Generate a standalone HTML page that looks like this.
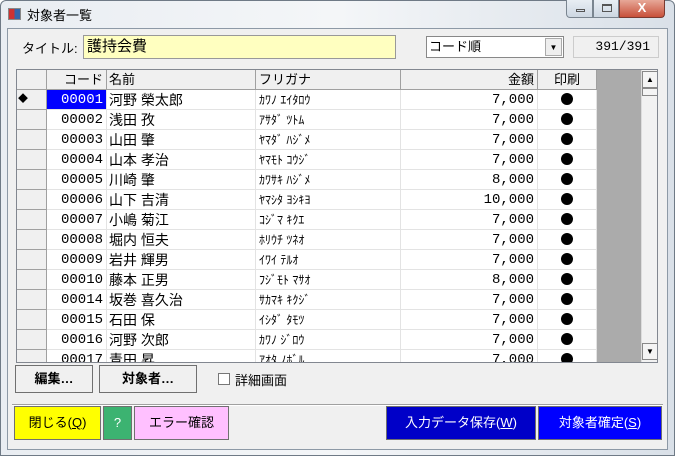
<!DOCTYPE html>
<html><head><meta charset="utf-8"><style>
*{margin:0;padding:0;box-sizing:border-box}
body{width:675px;height:456px;overflow:hidden;background:#fff;font-family:"Liberation Sans","Noto Sans CJK JP",sans-serif;font-size:13px;position:relative}
.a{position:absolute}
.win{left:0;top:0;width:675px;height:456px;background:linear-gradient(90deg,#e9edf2,#f4f6f8 50%,#d9e0e8);border:1px solid #6f7a86;border-radius:6px 6px 0 0}
.client{left:7px;top:28px;width:661px;height:422px;background:#f0f0f0;border:1px solid #8d99a6}
.grid{left:16px;top:69px;width:642px;height:294px;border:1px solid #828790;background:#ababab;overflow:hidden}
.row{position:absolute;left:0;height:20px;width:580px;background:#fff}
.c{position:absolute;top:0;height:20px;line-height:20px;border-right:1px solid #e3e3e3;border-bottom:1px solid #e3e3e3;white-space:nowrap;overflow:hidden}
.m{font-family:"Liberation Mono",monospace;font-size:14px}
.hdr .c{background:#f0f0f0;border-right:1px solid #a0a0a0;border-bottom:1px solid #a0a0a0}
.btn{position:absolute;border:1px solid #707070;text-align:center;font-size:13px}
.dot{display:inline-block;width:12px;height:12px;border-radius:50%;background:#000;vertical-align:-1px}
</style></head><body>
<div class="a win"></div>
<div class="a" style="left:8px;top:8px;width:13px;height:12px;background:linear-gradient(90deg,#c33 50%,#36a 50%);border:1px solid #888"></div>
<div class="a" style="left:27px;top:5px;font-size:13px">対象者一覧</div>
<div class="a" style="left:566px;top:0;width:27px;height:18px;border:1px solid #7a8590;border-top:0;border-radius:0 0 0 4px;background:linear-gradient(#e8eef4,#cdd7e2)"><div class="a" style="left:9px;top:9px;width:9px;height:3px;border:1px solid #555"></div></div>
<div class="a" style="left:593px;top:0;width:26px;height:18px;border:1px solid #7a8590;border-top:0;background:linear-gradient(#e8eef4,#cdd7e2)"><div class="a" style="left:8px;top:4px;width:10px;height:8px;border:1px solid #555;border-top-width:2px"></div></div>
<div class="a" style="left:619px;top:0;width:46px;height:18px;border:1px solid #7a3a30;border-top:0;border-radius:0 0 4px 0;background:linear-gradient(#e7a898,#c8503a);color:#fff;text-align:center;font-weight:bold;font-size:13px;line-height:16px">X</div>
<div class="a client"></div>
<div class="a" style="left:22px;top:38px">タイトル:</div>
<div class="a" style="left:83px;top:35px;width:313px;height:24px;background:#ffffc0;border:1px solid #999;font-size:15px;line-height:22px;padding-left:3px">護持会費</div>
<div class="a" style="left:426px;top:36px;width:138px;height:22px;background:#fff;border:1px solid #888;line-height:20px;padding-left:2px">コード順<div class="a" style="right:1px;top:1px;width:17px;height:18px;background:#eee;border:1px solid #aaa;text-align:center;font-size:8px;line-height:17px">▼</div></div>
<div class="a m" style="left:573px;top:36px;width:86px;height:22px;border:1px solid #ccc;text-align:right;padding-right:8px;line-height:20px;font-size:13px">391/391</div>
<div class="a grid">
<div class="row hdr" style="top:0"><div class="c" style="left:0;width:30px"></div><div class="c" style="left:30px;width:60px;text-align:right;padding-right:3px">コード</div><div class="c" style="left:90px;width:149px;padding-left:2px">名前</div><div class="c" style="left:239px;width:145px;padding-left:3px">フリガナ</div><div class="c" style="left:384px;width:137px;text-align:right;padding-right:3px">金額</div><div class="c" style="left:521px;width:59px;text-align:center">印刷</div></div>
<div id="rows"></div>
<div class="a" style="left:624px;top:0;width:17px;height:292px;background:#f2f2f2;border-left:1px solid #ddd">
<div class="a" style="left:0;top:1px;width:16px;height:17px;border:1px solid #888;background:#f4f4f4;font-size:8px;text-align:center;line-height:15px">▲</div>
<div class="a" style="left:0;top:18px;width:16px;height:8px;border:1px solid #888;background:#f4f4f4"></div>
<div class="a" style="left:0;top:273px;width:16px;height:17px;border:1px solid #888;background:#f4f4f4;font-size:8px;text-align:center;line-height:15px">▼</div></div>
</div>
<div class="btn" style="left:15px;top:365px;width:78px;height:28px;line-height:26px;font-weight:bold;background:#f0f0f0">編集…</div>
<div class="btn" style="left:99px;top:365px;width:98px;height:28px;line-height:26px;font-weight:bold;background:#f0f0f0">対象者…</div>
<div class="a" style="left:218px;top:373px;width:12px;height:12px;border:1px solid #777;background:#fff"></div>
<div class="a" style="left:235px;top:370px">詳細画面</div>
<div class="a" style="left:12px;top:404px;width:651px;border-top:1px solid #a0a0a0;border-bottom:1px solid #fff"></div>
<div class="btn" style="left:14px;top:406px;width:87px;height:34px;line-height:32px;background:#ffff00">閉じる(<u>Q</u>)</div>
<div class="btn" style="left:103px;top:406px;width:29px;height:34px;line-height:32px;background:#3cb371;color:#fff">?</div>
<div class="btn" style="left:134px;top:406px;width:95px;height:34px;line-height:32px;background:#ffc0ff">エラー確認</div>
<div class="btn" style="left:386px;top:406px;width:150px;height:34px;line-height:32px;background:#0000c8;color:#fff">入力データ保存(<u>W</u>)</div>
<div class="btn" style="left:538px;top:406px;width:124px;height:34px;line-height:32px;background:#0000ff;color:#fff">対象者確定(<u>S</u>)</div>
<script>
var d=[["00001","河野 榮太郎","ｶﾜﾉ ｴｲﾀﾛｳ","7,000"],["00002","浅田 孜","ｱｻﾀﾞ ﾂﾄﾑ","7,000"],["00003","山田 肇","ﾔﾏﾀﾞ ﾊｼﾞﾒ","7,000"],["00004","山本 孝治","ﾔﾏﾓﾄ ｺｳｼﾞ","7,000"],["00005","川崎 肇","ｶﾜｻｷ ﾊｼﾞﾒ","8,000"],["00006","山下 吉清","ﾔﾏｼﾀ ﾖｼｷﾖ","10,000"],["00007","小嶋 菊江","ｺｼﾞﾏ ｷｸｴ","7,000"],["00008","堀内 恒夫","ﾎﾘｳﾁ ﾂﾈｵ","7,000"],["00009","岩井 輝男","ｲﾜｲ ﾃﾙｵ","7,000"],["00010","藤本 正男","ﾌｼﾞﾓﾄ ﾏｻｵ","8,000"],["00014","坂巻 喜久治","ｻｶﾏｷ ｷｸｼﾞ","7,000"],["00015","石田 保","ｲｼﾀﾞ ﾀﾓﾂ","7,000"],["00016","河野 次郎","ｶﾜﾉ ｼﾞﾛｳ","7,000"],["00017","青田 昇","ｱｵﾀ ﾉﾎﾞﾙ","7,000"]];
var h="";d.forEach(function(r,i){var t=20+i*20;
h+='<div class="row" style="top:'+t+'px"><div class="c" style="left:0;width:30px;background:#f0f0f0;border-right:1px solid #a0a0a0;border-bottom:1px solid #a0a0a0;font-size:10px;padding-left:1px">'+(i==0?'◆':'')+'</div>'+
'<div class="c m" style="left:30px;width:60px;text-align:right;padding-right:3px;'+(i==0?'background:#0000ff;color:#fff':'')+'">'+r[0]+'</div>'+
'<div class="c" style="left:90px;width:149px;padding-left:2px;font-size:14px">'+r[1].replace(' ','&nbsp;')+'</div>'+
'<div class="c" style="left:239px;width:145px;padding-left:3px;font-size:12px">'+r[2]+'</div>'+
'<div class="c m" style="left:384px;width:137px;text-align:right;padding-right:3px">'+r[3]+'</div>'+
'<div class="c" style="left:521px;width:59px;text-align:center"><span class="dot"></span></div></div>';});
document.getElementById("rows").innerHTML=h;
</script>
</body></html>
